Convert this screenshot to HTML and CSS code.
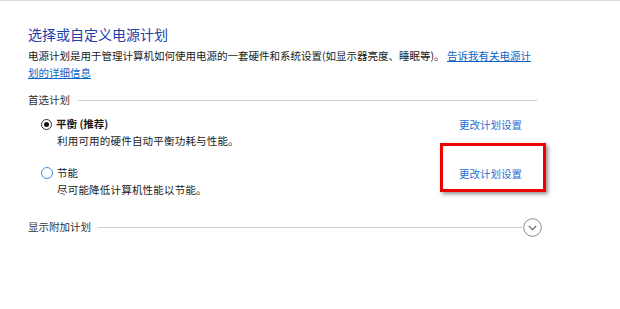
FILE: index.html
```html
<!DOCTYPE html>
<html lang="zh-CN">
<head>
<meta charset="utf-8">
<link rel="stylesheet" href="styles.css">
</head>
<body>
<div class="page">
  <h1 class="title">选择或自定义电源计划</h1>
  <p class="desc">电源计划是用于管理计算机如何使用电源的一套硬件和系统设置(如显示器亮度、睡眠等)。 <a class="link" href="#">告诉我有关电源计划的详细信息</a></p>

  <div class="section">
    <span class="section-label">首选计划</span>
    <span class="rule"></span>
  </div>

  <div class="plan plan-first">
    <div class="plan-row">
      <span class="radio checked"></span>
      <span class="plan-name bold">平衡 (推荐)</span>
      <a class="change" href="#">更改计划设置</a>
    </div>
    <div class="plan-desc">利用可用的硬件自动平衡功耗与性能。</div>
  </div>

  <div class="plan plan-second">
    <div class="plan-row">
      <span class="radio hover"></span>
      <span class="plan-name">节能</span>
      <a class="change" href="#">更改计划设置</a>
    </div>
    <div class="plan-desc">尽可能降低计算机性能以节能。</div>
  </div>

  <div class="section section-more">
    <span class="section-label">显示附加计划</span>
    <span class="rule"></span>
    <span class="expand">
      <svg width="19" height="19" viewBox="0 0 19 19"><circle cx="9.5" cy="9.5" r="8.8" fill="none" stroke="#8a8a8a" stroke-width="1"/><path d="M5.8 8 L9.5 11.6 L13.2 8" fill="none" stroke="#6a6a6a" stroke-width="1.2"/></svg>
    </span>
  </div>

  <div class="highlight"></div>
</div>
</body>
</html>
```
FILE: styles.css
```css
html, body {
  margin: 0;
  padding: 0;
  background: #ffffff;
}
body {
  width: 620px;
  height: 309px;
  overflow: hidden;
  border-top: 1px solid #d9d9d9;
  box-sizing: border-box;
  font-family: "Noto Sans CJK SC", "Microsoft YaHei", sans-serif;
  font-size: 10.5px;
  color: #1a1a1a;
}
.page {
  position: relative;
  padding-left: 28px;
  width: 509px;
}
.title {
  margin: 23px 0 0 0;
  font-size: 14px;
  line-height: 20px;
  font-weight: normal;
  color: #2340a8;
}
.desc {
  margin: 3px 0 0 0;
  width: 505px;
  line-height: 17px;
}
.link {
  color: #0a64c8;
  text-decoration: underline;
}
.section {
  display: flex;
  align-items: center;
  margin-top: 11px;
  height: 16px;
}
.section-label {
  color: #333;
  line-height: 16px;
  white-space: nowrap;
}
.rule {
  flex: 1;
  height: 1px;
  background: #cfcfcf;
  margin-left: 8px;
}
.plan {
  padding-left: 13px;
}
.plan-first {
  margin-top: 8px;
}
.plan-second {
  margin-top: 16px;
}
.plan-row {
  display: flex;
  align-items: center;
  height: 16px;
}
.radio {
  width: 11px;
  height: 11px;
  border-radius: 50%;
  box-sizing: border-box;
  flex: none;
  display: flex;
  align-items: center;
  justify-content: center;
}
.radio.checked {
  border: 1px solid #333;
}
.radio.checked::after {
  content: "";
  width: 5px;
  height: 5px;
  border-radius: 50%;
  background: #111;
}
.radio.hover {
  width: 12px;
  height: 12px;
  border: 1.5px solid #3d8fdc;
}
.plan-name {
  margin-left: 4px;
  line-height: 16px;
}
.bold {
  font-weight: bold;
}
.change {
  margin-left: auto;
  margin-right: 15px;
  color: #2a6fd0;
  text-decoration: none;
}
.plan-desc {
  padding-left: 16px;
  margin-top: 1px;
  line-height: 16px;
  letter-spacing: 0.2px;
}
.section-more {
  margin-top: 21px;
}
.section-more .rule {
  margin-left: 7px;
}
.expand {
  display: flex;
  margin-left: 1px;
  margin-right: -5px;
}
.highlight {
  position: absolute;
  left: 440px;
  top: 119px;
  width: 106px;
  height: 49px;
  box-sizing: border-box;
  border: 3px solid #ee0000;
  box-shadow: 2px 2px 4px rgba(0,0,0,0.45);
}
```
